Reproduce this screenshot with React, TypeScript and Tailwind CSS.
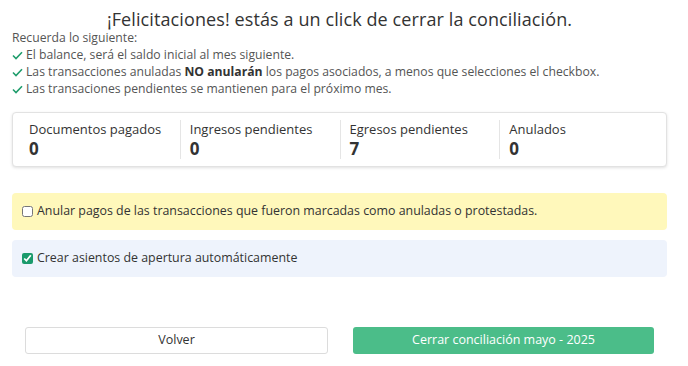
const font = { fontFamily: '"Open Sans", "Liberation Sans", sans-serif' };

function Check() {
  return (
    <svg width="11" height="9" viewBox="0 0 11 9" className="mr-[3px] shrink-0">
      <path d="M1 4.5 L4 7.5 L10 1.2" fill="none" stroke="#1f9d6c" strokeWidth="1.6" />
    </svg>
  );
}

const stats = [
  { label: "Documentos pagados", value: "0" },
  { label: "Ingresos pendientes", value: "0" },
  { label: "Egresos pendientes", value: "7" },
  { label: "Anulados", value: "0" },
];

export default function App() {
  return (
    <div className="h-[366px] w-[688px] bg-white text-[#555]" style={font}>
      <div className="ml-[12px] w-[655px]">
        <h1 className="pt-[7px] text-center text-[18px] leading-[24px] text-[#333] tracking-[0.1px]">
          ¡Felicitaciones! estás a un click de cerrar la conciliación.
        </h1>
        <div className="-mt-[1px] text-[12.2px] leading-[16.9px]">
          <p>Recuerda lo siguiente:</p>
          <p className="flex items-center">
            <Check />
            El balance, será el saldo inicial al mes siguiente.
          </p>
          <p className="flex items-center">
            <Check />
            <span>
              Las transacciones anuladas <b className="text-[#333]">NO anularán</b> los pagos asociados, a menos que
              selecciones el checkbox.
            </span>
          </p>
          <p className="flex items-center">
            <Check />
            Las transaciones pendientes se mantienen para el próximo mes.
          </p>
        </div>

        <div className="mt-[14px] grid h-[55px] grid-cols-4 rounded-[4px] border border-[#e2e2e2] bg-white px-[7px] py-[7px] shadow-[0_1px_3px_rgba(0,0,0,0.12)]">
          {stats.map((s, i) => (
            <div
              key={s.label}
              className={`flex flex-col pl-[9px] ${i > 0 ? "border-l border-[#e5e5e5]" : ""}`}
            >
              <span className="text-[13px] leading-[18px] text-[#333]">{s.label}</span>
              <span className="text-[17px] font-bold leading-[21px] text-[#333]">{s.value}</span>
            </div>
          ))}
        </div>

        <label className="mt-[26px] flex h-[37px] items-center rounded-[4px] bg-[#fff8bb] pl-[10px] text-[12.4px] text-[#333]">
          <input type="checkbox" className="mr-[4px] h-[11px] w-[11px]" />
          Anular pagos de las transacciones que fueron marcadas como anuladas o protestadas.
        </label>

        <label className="mt-[10px] flex h-[37px] items-center rounded-[4px] bg-[#eef3fc] pl-[10px] text-[12.4px] text-[#333]">
          <input type="checkbox" defaultChecked className="mr-[4px] h-[11px] w-[11px] accent-[#1a9a6c]" />
          Crear asientos de apertura automáticamente
        </label>

        <div className="mt-[50px] flex gap-[25px] px-[13px]">
          <button className="h-[27px] flex-1 rounded-[3px] border border-[#dcdcdc] bg-white text-[12.5px] text-[#333]">
            Volver
          </button>
          <button className="h-[27px] flex-1 rounded-[3px] bg-[#4bbd89] text-[12.5px] text-white">
            Cerrar conciliación mayo - 2025
          </button>
        </div>
      </div>
    </div>
  );
}
